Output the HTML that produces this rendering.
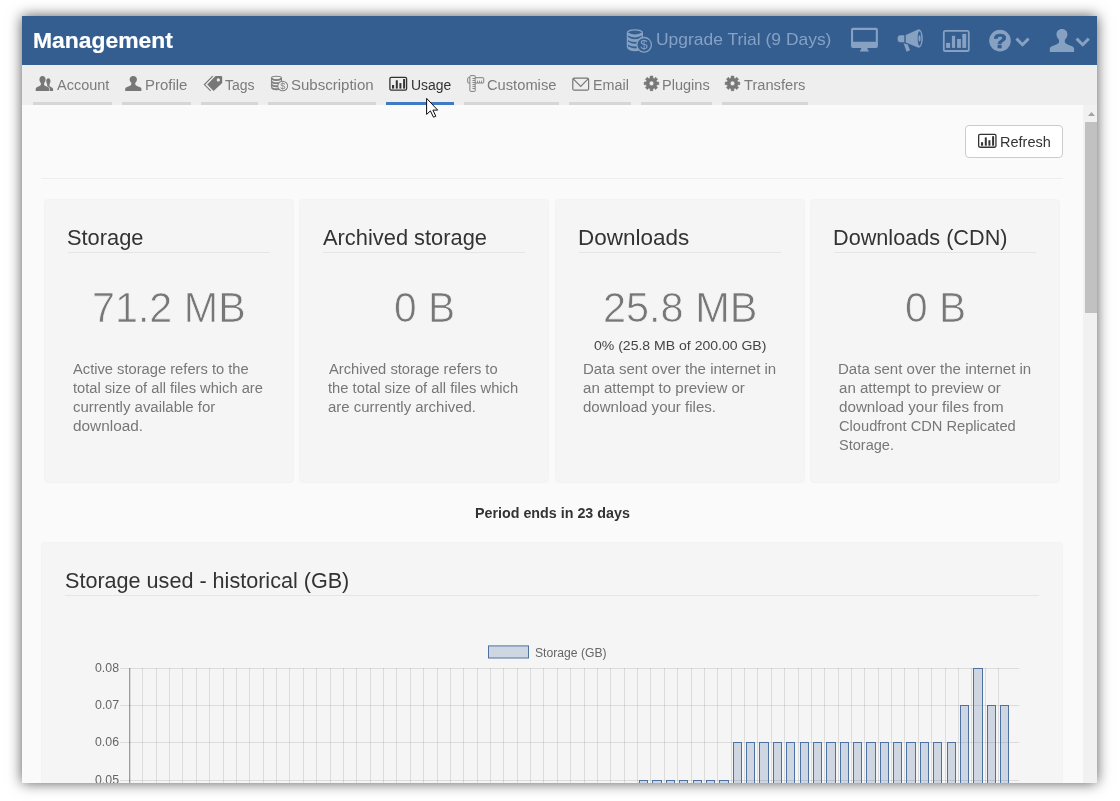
<!DOCTYPE html>
<html lang="en"><head><meta charset="utf-8"><title>Management - Usage</title>
<style>
html,body{margin:0;padding:0;background:#fff;width:1120px;height:801px;overflow:hidden}
body{font-family:'Liberation Sans', sans-serif;position:relative}
.win{position:absolute;left:22px;top:16px;width:1075px;height:767px;overflow:hidden;background:#fbfafa;box-shadow:0 0 13px rgba(0,0,0,.66)}
.o{position:absolute;left:-22px;top:-16px;width:1120px;height:801px;will-change:transform}
.o>*{position:absolute}
.hdr{left:22px;top:16px;width:1075px;height:49px;background:#345e90}
.tabs{left:22px;top:65px;width:1075px;height:40px;background:#eee}
.ul{top:102px;height:3px;background:#d6d6d6}
.ul.on{background:#3f7ac4}
.t{white-space:nowrap;line-height:normal;transform-origin:0 0}
.sbt{left:1083px;top:105px;width:17px;height:700px;background:#f1f1f1}
.sbh{left:1085px;top:122px;width:13px;height:191px;background:#c1c1c1}
.btn{left:965px;top:125px;width:96px;height:31px;border:1px solid #ccc;border-radius:4px;background:#fff}
.hr{left:41px;top:178px;width:1022px;height:1px;background:#eee}
.p{top:199px;width:248px;height:282px;background:#f5f5f5;border:1px solid #f2f2f2;border-radius:4px}
.hl{height:1px;background:#e5e5e5}
.big{left:41px;top:542px;width:1020px;height:300px;background:#f5f5f5;border:1px solid #f3f3f3;border-radius:4px}
svg{left:0;top:0}
svg text{font-family:'Liberation Sans', sans-serif}
</style></head>
<body>
<div class="win"><div class="o">
<div class="hdr"></div>
<div class="tabs"></div>
<div class="ul" style="left:33px;width:79px"></div><div class="ul" style="left:122px;width:69px"></div><div class="ul" style="left:201px;width:57px"></div><div class="ul" style="left:268px;width:108px"></div><div class="ul on" style="left:386px;width:68px"></div><div class="ul" style="left:464px;width:95px"></div><div class="ul" style="left:569px;width:62px"></div><div class="ul" style="left:641px;width:71px"></div><div class="ul" style="left:722px;width:86px"></div>
<div class="sbt"></div><div class="sbh"></div>
<svg width="17" height="17" style="left:1083px;top:105px" viewBox="0 0 17 17"><path d="M5 11 L8.5 7 L12 11 Z" fill="#a3a3a3"/></svg>
<div class="btn"></div>
<div class="hr"></div>
<div class="p" style="left:44px"></div><div class="hl" style="left:68px;top:252px;width:202px"></div><div class="p" style="left:299px"></div><div class="hl" style="left:323px;top:252px;width:202px"></div><div class="p" style="left:555px"></div><div class="hl" style="left:579px;top:252px;width:202px"></div><div class="p" style="left:810px"></div><div class="hl" style="left:834px;top:252px;width:202px"></div>
<div class="big"></div>
<div class="hl" style="left:65px;top:595px;width:974px"></div>
<svg width="1120" height="801" viewBox="0 0 1120 801">
<rect x="120" y="668" width="899" height="1" fill="#000" fill-opacity=".1"/>
<rect x="120" y="705" width="899" height="1" fill="#000" fill-opacity=".1"/>
<rect x="120" y="742" width="899" height="1" fill="#000" fill-opacity=".1"/>
<rect x="120" y="780" width="899" height="1" fill="#000" fill-opacity=".1"/>
<rect x="120" y="817" width="899" height="1" fill="#000" fill-opacity=".1"/>
<rect x="142" y="668" width="1" height="140" fill="#000" fill-opacity=".1"/>
<rect x="156" y="668" width="1" height="140" fill="#000" fill-opacity=".1"/>
<rect x="169" y="668" width="1" height="140" fill="#000" fill-opacity=".1"/>
<rect x="182" y="668" width="1" height="140" fill="#000" fill-opacity=".1"/>
<rect x="196" y="668" width="1" height="140" fill="#000" fill-opacity=".1"/>
<rect x="209" y="668" width="1" height="140" fill="#000" fill-opacity=".1"/>
<rect x="223" y="668" width="1" height="140" fill="#000" fill-opacity=".1"/>
<rect x="236" y="668" width="1" height="140" fill="#000" fill-opacity=".1"/>
<rect x="249" y="668" width="1" height="140" fill="#000" fill-opacity=".1"/>
<rect x="263" y="668" width="1" height="140" fill="#000" fill-opacity=".1"/>
<rect x="276" y="668" width="1" height="140" fill="#000" fill-opacity=".1"/>
<rect x="289" y="668" width="1" height="140" fill="#000" fill-opacity=".1"/>
<rect x="303" y="668" width="1" height="140" fill="#000" fill-opacity=".1"/>
<rect x="316" y="668" width="1" height="140" fill="#000" fill-opacity=".1"/>
<rect x="330" y="668" width="1" height="140" fill="#000" fill-opacity=".1"/>
<rect x="343" y="668" width="1" height="140" fill="#000" fill-opacity=".1"/>
<rect x="356" y="668" width="1" height="140" fill="#000" fill-opacity=".1"/>
<rect x="370" y="668" width="1" height="140" fill="#000" fill-opacity=".1"/>
<rect x="383" y="668" width="1" height="140" fill="#000" fill-opacity=".1"/>
<rect x="396" y="668" width="1" height="140" fill="#000" fill-opacity=".1"/>
<rect x="410" y="668" width="1" height="140" fill="#000" fill-opacity=".1"/>
<rect x="423" y="668" width="1" height="140" fill="#000" fill-opacity=".1"/>
<rect x="437" y="668" width="1" height="140" fill="#000" fill-opacity=".1"/>
<rect x="450" y="668" width="1" height="140" fill="#000" fill-opacity=".1"/>
<rect x="463" y="668" width="1" height="140" fill="#000" fill-opacity=".1"/>
<rect x="477" y="668" width="1" height="140" fill="#000" fill-opacity=".1"/>
<rect x="490" y="668" width="1" height="140" fill="#000" fill-opacity=".1"/>
<rect x="503" y="668" width="1" height="140" fill="#000" fill-opacity=".1"/>
<rect x="517" y="668" width="1" height="140" fill="#000" fill-opacity=".1"/>
<rect x="530" y="668" width="1" height="140" fill="#000" fill-opacity=".1"/>
<rect x="543" y="668" width="1" height="140" fill="#000" fill-opacity=".1"/>
<rect x="557" y="668" width="1" height="140" fill="#000" fill-opacity=".1"/>
<rect x="570" y="668" width="1" height="140" fill="#000" fill-opacity=".1"/>
<rect x="584" y="668" width="1" height="140" fill="#000" fill-opacity=".1"/>
<rect x="597" y="668" width="1" height="140" fill="#000" fill-opacity=".1"/>
<rect x="610" y="668" width="1" height="140" fill="#000" fill-opacity=".1"/>
<rect x="624" y="668" width="1" height="140" fill="#000" fill-opacity=".1"/>
<rect x="637" y="668" width="1" height="140" fill="#000" fill-opacity=".1"/>
<rect x="650" y="668" width="1" height="140" fill="#000" fill-opacity=".1"/>
<rect x="664" y="668" width="1" height="140" fill="#000" fill-opacity=".1"/>
<rect x="677" y="668" width="1" height="140" fill="#000" fill-opacity=".1"/>
<rect x="691" y="668" width="1" height="140" fill="#000" fill-opacity=".1"/>
<rect x="704" y="668" width="1" height="140" fill="#000" fill-opacity=".1"/>
<rect x="717" y="668" width="1" height="140" fill="#000" fill-opacity=".1"/>
<rect x="731" y="668" width="1" height="140" fill="#000" fill-opacity=".1"/>
<rect x="744" y="668" width="1" height="140" fill="#000" fill-opacity=".1"/>
<rect x="757" y="668" width="1" height="140" fill="#000" fill-opacity=".1"/>
<rect x="771" y="668" width="1" height="140" fill="#000" fill-opacity=".1"/>
<rect x="784" y="668" width="1" height="140" fill="#000" fill-opacity=".1"/>
<rect x="798" y="668" width="1" height="140" fill="#000" fill-opacity=".1"/>
<rect x="811" y="668" width="1" height="140" fill="#000" fill-opacity=".1"/>
<rect x="824" y="668" width="1" height="140" fill="#000" fill-opacity=".1"/>
<rect x="838" y="668" width="1" height="140" fill="#000" fill-opacity=".1"/>
<rect x="851" y="668" width="1" height="140" fill="#000" fill-opacity=".1"/>
<rect x="864" y="668" width="1" height="140" fill="#000" fill-opacity=".1"/>
<rect x="878" y="668" width="1" height="140" fill="#000" fill-opacity=".1"/>
<rect x="891" y="668" width="1" height="140" fill="#000" fill-opacity=".1"/>
<rect x="904" y="668" width="1" height="140" fill="#000" fill-opacity=".1"/>
<rect x="918" y="668" width="1" height="140" fill="#000" fill-opacity=".1"/>
<rect x="931" y="668" width="1" height="140" fill="#000" fill-opacity=".1"/>
<rect x="945" y="668" width="1" height="140" fill="#000" fill-opacity=".1"/>
<rect x="958" y="668" width="1" height="140" fill="#000" fill-opacity=".1"/>
<rect x="971" y="668" width="1" height="140" fill="#000" fill-opacity=".1"/>
<rect x="985" y="668" width="1" height="140" fill="#000" fill-opacity=".1"/>
<rect x="998" y="668" width="1" height="140" fill="#000" fill-opacity=".1"/>
<rect x="129" y="668" width="1.3" height="140" fill="#000" fill-opacity=".36"/>
<rect x="639.5" y="780.5" width="8" height="70" fill="rgba(52,94,144,.2)" stroke="#4d72a1" stroke-width="1"/>
<rect x="652.5" y="780.5" width="9" height="70" fill="rgba(52,94,144,.2)" stroke="#4d72a1" stroke-width="1"/>
<rect x="666.5" y="780.5" width="8" height="70" fill="rgba(52,94,144,.2)" stroke="#4d72a1" stroke-width="1"/>
<rect x="679.5" y="780.5" width="8" height="70" fill="rgba(52,94,144,.2)" stroke="#4d72a1" stroke-width="1"/>
<rect x="693.5" y="780.5" width="8" height="70" fill="rgba(52,94,144,.2)" stroke="#4d72a1" stroke-width="1"/>
<rect x="706.5" y="780.5" width="8" height="70" fill="rgba(52,94,144,.2)" stroke="#4d72a1" stroke-width="1"/>
<rect x="719.5" y="780.5" width="9" height="70" fill="rgba(52,94,144,.2)" stroke="#4d72a1" stroke-width="1"/>
<rect x="733.5" y="742.5" width="8" height="108" fill="rgba(52,94,144,.2)" stroke="#4d72a1" stroke-width="1"/>
<rect x="746.5" y="742.5" width="8" height="108" fill="rgba(52,94,144,.2)" stroke="#4d72a1" stroke-width="1"/>
<rect x="759.5" y="742.5" width="9" height="108" fill="rgba(52,94,144,.2)" stroke="#4d72a1" stroke-width="1"/>
<rect x="773.5" y="742.5" width="8" height="108" fill="rgba(52,94,144,.2)" stroke="#4d72a1" stroke-width="1"/>
<rect x="786.5" y="742.5" width="8" height="108" fill="rgba(52,94,144,.2)" stroke="#4d72a1" stroke-width="1"/>
<rect x="800.5" y="742.5" width="8" height="108" fill="rgba(52,94,144,.2)" stroke="#4d72a1" stroke-width="1"/>
<rect x="813.5" y="742.5" width="8" height="108" fill="rgba(52,94,144,.2)" stroke="#4d72a1" stroke-width="1"/>
<rect x="826.5" y="742.5" width="9" height="108" fill="rgba(52,94,144,.2)" stroke="#4d72a1" stroke-width="1"/>
<rect x="840.5" y="742.5" width="8" height="108" fill="rgba(52,94,144,.2)" stroke="#4d72a1" stroke-width="1"/>
<rect x="853.5" y="742.5" width="8" height="108" fill="rgba(52,94,144,.2)" stroke="#4d72a1" stroke-width="1"/>
<rect x="866.5" y="742.5" width="9" height="108" fill="rgba(52,94,144,.2)" stroke="#4d72a1" stroke-width="1"/>
<rect x="880.5" y="742.5" width="8" height="108" fill="rgba(52,94,144,.2)" stroke="#4d72a1" stroke-width="1"/>
<rect x="893.5" y="742.5" width="8" height="108" fill="rgba(52,94,144,.2)" stroke="#4d72a1" stroke-width="1"/>
<rect x="906.5" y="742.5" width="9" height="108" fill="rgba(52,94,144,.2)" stroke="#4d72a1" stroke-width="1"/>
<rect x="920.5" y="742.5" width="8" height="108" fill="rgba(52,94,144,.2)" stroke="#4d72a1" stroke-width="1"/>
<rect x="933.5" y="742.5" width="8" height="108" fill="rgba(52,94,144,.2)" stroke="#4d72a1" stroke-width="1"/>
<rect x="947.5" y="742.5" width="8" height="108" fill="rgba(52,94,144,.2)" stroke="#4d72a1" stroke-width="1"/>
<rect x="960.5" y="705.5" width="8" height="145" fill="rgba(52,94,144,.2)" stroke="#4d72a1" stroke-width="1"/>
<rect x="973.5" y="668.5" width="9" height="182" fill="rgba(52,94,144,.2)" stroke="#4d72a1" stroke-width="1"/>
<rect x="987.5" y="705.5" width="8" height="145" fill="rgba(52,94,144,.2)" stroke="#4d72a1" stroke-width="1"/>
<rect x="1000.5" y="705.5" width="8" height="145" fill="rgba(52,94,144,.2)" stroke="#4d72a1" stroke-width="1"/>
<rect x="488.5" y="645.9" width="40" height="12.1" fill="rgba(52,94,144,.2)" stroke="#4d72a1" stroke-width="1"/>
<g fill="none" stroke="#87a1c2"><path d="M628.2 32.9a6.7 3.1 0 0 0 13.4 0" stroke-width="2.8"/><path d="M628.2 37.5a6.7 3.1 0 0 0 13.4 0" stroke-width="2.8"/><path d="M628.2 42.1a6.7 3.1 0 0 0 13.4 0" stroke-width="2.8"/><path d="M628.2 46.7a6.7 3.1 0 0 0 13.4 0" stroke-width="2.8"/><path d="M627.45 32.8V47M642.35 32.8V38" stroke-width="1.3"/><ellipse cx="634.9" cy="32.8" rx="7.45" ry="2.9" stroke-width="1.3"/><circle cx="644.1" cy="44.8" r="7.3" fill="#345e90" stroke-width="1.3"/></g><text x="644.1" y="49.3" font-size="13.5" text-anchor="middle" fill="#87a1c2">$</text>
<path fill="#87a1c2" fill-rule="evenodd" d="M853 27.8H875.9A2 2 0 0 1 877.9 29.8V46.1A2 2 0 0 1 875.9 48.1H867.3L867.9 50.2H868.7V51.4H859.9V50.2H860.7L861.3 48.1H853A2 2 0 0 1 851 46.1V29.8A2 2 0 0 1 853 27.8ZM853.1 30V41.8H875.8V30Z"/>
<g fill="#87a1c2"><path d="M900.6 35.2H904.3V42.2H900.6A3 3 0 0 1 897.6 39.2V38.2A3 3 0 0 1 900.6 35.2Z"/><path fill-rule="evenodd" d="M905.7 34.9L918.6 29.3C921 29.3 922.8 33.4 922.8 38.5C922.8 43.6 921 47.8 918.6 47.8L905.7 42.6ZM919.5 31.3C918.5 31.3 917.7 34.5 917.7 38.5C917.7 42.5 918.5 45.7 919.5 45.7C920.5 45.7 921.3 42.5 921.3 38.5C921.3 34.5 920.5 31.3 919.5 31.3Z"/><ellipse cx="919.5" cy="38.5" rx="1.1" ry="3.2"/><path d="M903.6 43.2L907.8 44.4L910 50.2L906.6 51.8Z"/></g>
<rect x="943.8" y="30.9" width="25.000000000000068" height="20.099999999999998" rx="1.6" fill="none" stroke="#87a1c2" stroke-width="1.8"/><rect x="946.1" y="42.9" width="4.00" height="5.00" fill="#87a1c2"/><rect x="951.9" y="35.8" width="3.20" height="12.10" fill="#87a1c2"/><rect x="957.1" y="39" width="3.80" height="8.90" fill="#87a1c2"/><rect x="962.3" y="33.9" width="3.90" height="14.00" fill="#87a1c2"/>
<circle cx="1000" cy="40.6" r="10.8" fill="#87a1c2"/><text transform="translate(1000.1 48) scale(1.12 1)" font-size="20" font-weight="700" text-anchor="middle" fill="#345e90" stroke="#345e90" stroke-width=".7">?</text>
<path d="M1016.4 38.6L1022.5 44.7L1028.6 38.6M1076.6 38.6L1082.7 44.7L1088.8 38.6" fill="none" stroke="#87a1c2" stroke-width="2.9"/>
<path transform="translate(1049.8 29.1) scale(1.0125 1.0000)" d="M12 0C15.2 0 17.4 2.3 17.4 5.2C17.4 7.2 16.6 9 15.3 10.2C14.8 10.7 14.8 12 14.8 12.5C14.8 13.8 15.8 14.6 17.5 15.3L22 17.2C23.4 17.8 24 18.8 24 20L24 22.8L0 22.8L0 20C0 18.8 .6 17.8 2 17.2L6.5 15.3C8.2 14.6 9.2 13.8 9.2 12.5C9.2 12 9.2 10.7 8.7 10.2C7.4 9 6.6 7.2 6.6 5.2C6.6 2.3 8.8 0 12 0Z" fill="#87a1c2" />
<path transform="translate(43.6 78.2) scale(0.3958 0.5570)" d="M12 0C15.2 0 17.4 2.3 17.4 5.2C17.4 7.2 16.6 9 15.3 10.2C14.8 10.7 14.8 12 14.8 12.5C14.8 13.8 15.8 14.6 17.5 15.3L22 17.2C23.4 17.8 24 18.8 24 20L24 22.8L0 22.8L0 20C0 18.8 .6 17.8 2 17.2L6.5 15.3C8.2 14.6 9.2 13.8 9.2 12.5C9.2 12 9.2 10.7 8.7 10.2C7.4 9 6.6 7.2 6.6 5.2C6.6 2.3 8.8 0 12 0Z" fill="#777" />
<path transform="translate(35.7 76) scale(0.5667 0.6535)" d="M12 0C15.2 0 17.4 2.3 17.4 5.2C17.4 7.2 16.6 9 15.3 10.2C14.8 10.7 14.8 12 14.8 12.5C14.8 13.8 15.8 14.6 17.5 15.3L22 17.2C23.4 17.8 24 18.8 24 20L24 22.8L0 22.8L0 20C0 18.8 .6 17.8 2 17.2L6.5 15.3C8.2 14.6 9.2 13.8 9.2 12.5C9.2 12 9.2 10.7 8.7 10.2C7.4 9 6.6 7.2 6.6 5.2C6.6 2.3 8.8 0 12 0Z" fill="#777" stroke="#eee" stroke-width="2" paint-order="stroke"/>
<path transform="translate(125.2 75.9) scale(0.6750 0.6579)" d="M12 0C15.2 0 17.4 2.3 17.4 5.2C17.4 7.2 16.6 9 15.3 10.2C14.8 10.7 14.8 12 14.8 12.5C14.8 13.8 15.8 14.6 17.5 15.3L22 17.2C23.4 17.8 24 18.8 24 20L24 22.8L0 22.8L0 20C0 18.8 .6 17.8 2 17.2L6.5 15.3C8.2 14.6 9.2 13.8 9.2 12.5C9.2 12 9.2 10.7 8.7 10.2C7.4 9 6.6 7.2 6.6 5.2C6.6 2.3 8.8 0 12 0Z" fill="#777" />
<path d="M215.5 76H221A1.2 1.2 0 0 1 222.2 77.2V83L213.6 90.9L207.3 84.6ZM219.9 79.9A1.6 1.6 0 1 0 216.7 79.9A1.6 1.6 0 1 0 219.9 79.9Z" fill="#777" fill-rule="evenodd"/><path d="M212.8 76.2L204.4 84.6L210.7 90.9" fill="none" stroke="#777" stroke-width="1.2"/>
<g transform="translate(-152.647 56.441) scale(0.6759 0.6590)"><g fill="none" stroke="#808080"><path d="M628.2 32.9a6.7 3.1 0 0 0 13.4 0" stroke-width="2.8"/><path d="M628.2 37.5a6.7 3.1 0 0 0 13.4 0" stroke-width="2.8"/><path d="M628.2 42.1a6.7 3.1 0 0 0 13.4 0" stroke-width="2.8"/><path d="M628.2 46.7a6.7 3.1 0 0 0 13.4 0" stroke-width="2.8"/><path d="M627.45 32.8V47M642.35 32.8V38" stroke-width="1.5"/><ellipse cx="634.9" cy="32.8" rx="7.45" ry="2.9" stroke-width="1.5"/><circle cx="644.1" cy="44.8" r="7.3" fill="#eee" stroke-width="1.5"/></g><text x="644.1" y="49.3" font-size="13.5" text-anchor="middle" fill="#808080">$</text></g>
<rect x="389.9" y="77.4" width="16.7" height="12.7" rx="1.4" fill="none" stroke="#333" stroke-width="1.3"/><rect x="392" y="85" width="2.10" height="3.60" fill="#333"/><rect x="395.8" y="80.3" width="2.00" height="8.30" fill="#333"/><rect x="399.4" y="83.1" width="2.00" height="5.50" fill="#333"/><rect x="403.1" y="79" width="2.00" height="9.60" fill="#333"/>
<g fill="#eee" stroke="#808080" stroke-width="1"><rect x="467.7" y="77.7" width="16" height="5.3" rx=".6"/><path d="M477.5 80.6V83M479.5 80.6V83M481.5 80.6V83" stroke-width=".8"/><rect x="469.9" y="75.6" width="5.3" height="15.8" rx=".6"/><path d="M472.4 78.5H475M472.4 80.5H475M472.4 82.5H475M472.4 84.5H475M472.4 86.5H475M472.4 88.5H475" stroke-width=".9"/></g>
<rect x="572.8" y="78.2" width="15.8" height="12" rx="1.5" fill="none" stroke="#777" stroke-width="1.2"/><path d="M573 78.6L580.7 86.4L588.4 78.6" fill="none" stroke="#777" stroke-width="1.2"/>
<path d="M656.70 81.96L658.78 82.05L658.78 84.75L656.70 84.84L656.20 86.06L657.60 87.59L655.69 89.50L654.16 88.10L652.94 88.60L652.85 90.68L650.15 90.68L650.06 88.60L648.84 88.10L647.31 89.50L645.40 87.59L646.80 86.06L646.30 84.84L644.22 84.75L644.22 82.05L646.30 81.96L646.80 80.74L645.40 79.21L647.31 77.30L648.84 78.70L650.06 78.20L650.15 76.12L652.85 76.12L652.94 78.20L654.16 78.70L655.69 77.30L657.60 79.21L656.20 80.74ZM653.80 83.4A2.3 2.3 0 1 0 649.20 83.4A2.3 2.3 0 1 0 653.80 83.4Z" fill="#777" fill-rule="evenodd" stroke="#777" stroke-width=".6" stroke-linejoin="round"/>
<path d="M737.70 81.96L739.78 82.05L739.78 84.75L737.70 84.84L737.20 86.06L738.60 87.59L736.69 89.50L735.16 88.10L733.94 88.60L733.85 90.68L731.15 90.68L731.06 88.60L729.84 88.10L728.31 89.50L726.40 87.59L727.80 86.06L727.30 84.84L725.22 84.75L725.22 82.05L727.30 81.96L727.80 80.74L726.40 79.21L728.31 77.30L729.84 78.70L731.06 78.20L731.15 76.12L733.85 76.12L733.94 78.20L735.16 78.70L736.69 77.30L738.60 79.21L737.20 80.74ZM734.80 83.4A2.3 2.3 0 1 0 730.20 83.4A2.3 2.3 0 1 0 734.80 83.4Z" fill="#777" fill-rule="evenodd" stroke="#777" stroke-width=".6" stroke-linejoin="round"/>
<rect x="978.65" y="134.35" width="17.300000000000022" height="12.900000000000016" rx="1.4" fill="none" stroke="#333" stroke-width="1.3"/><rect x="981" y="142.2" width="2.10" height="3.50" fill="#333"/><rect x="984.8" y="137.4" width="2.00" height="8.30" fill="#333"/><rect x="988.4" y="140.2" width="2.00" height="5.50" fill="#333"/><rect x="992.1" y="136.2" width="2.00" height="9.50" fill="#333"/>
<path d="M426.6 98.4V114.4L430.4 110.9L433.5 117.2L435.8 116.2L432.9 110.1H437.7Z" fill="#fff" stroke="#0a0a14" stroke-width="1" stroke-linejoin="miter"/>
</svg>
<span class="t" style="left:32.97px;top:28px;font-size:22px;font-weight:700;color:#fff;transform:scaleX(1.0396);-webkit-text-stroke:.2px #fff;">Management</span><span class="t" style="left:56.77px;top:77px;font-size:14px;font-weight:400;color:#7b7b7b;transform:scaleX(1.0344);">Account</span><span class="t" style="left:145.37px;top:77px;font-size:14px;font-weight:400;color:#7b7b7b;transform:scaleX(1.0681);">Profile</span><span class="t" style="left:225.49px;top:77px;font-size:14px;font-weight:400;color:#7b7b7b;transform:scaleX(1.0015);">Tags</span><span class="t" style="left:291.32px;top:77px;font-size:14px;font-weight:400;color:#7b7b7b;transform:scaleX(1.0728);">Subscription</span><span class="t" style="left:410.82px;top:77px;font-size:14px;font-weight:400;color:#333;transform:scaleX(0.9957);">Usage</span><span class="t" style="left:487.25px;top:77px;font-size:14px;font-weight:400;color:#7b7b7b;transform:scaleX(1.0493);">Customise</span><span class="t" style="left:592.57px;top:77px;font-size:14px;font-weight:400;color:#7b7b7b;transform:scaleX(1.0249);">Email</span><span class="t" style="left:661.81px;top:77px;font-size:14px;font-weight:400;color:#7b7b7b;transform:scaleX(1.0391);">Plugins</span><span class="t" style="left:743.67px;top:77px;font-size:14px;font-weight:400;color:#7b7b7b;transform:scaleX(1.0469);">Transfers</span><span class="t" style="left:656.35px;top:30px;font-size:17px;font-weight:400;color:#86a1c4;transform:scaleX(1.0258);">Upgrade Trial (9 Days)</span><span class="t" style="left:999.81px;top:134px;font-size:14px;font-weight:400;color:#333;transform:scaleX(1.0368);">Refresh</span><span class="t" style="left:67.01px;top:225px;font-size:22px;font-weight:400;color:#333;transform:scaleX(0.9922);">Storage</span><span class="t" style="left:323.46px;top:225px;font-size:22px;font-weight:400;color:#333;transform:scaleX(0.9935);">Archived storage</span><span class="t" style="left:577.66px;top:225px;font-size:22px;font-weight:400;color:#333;transform:scaleX(1.0212);">Downloads</span><span class="t" style="left:833.12px;top:225px;font-size:22px;font-weight:400;color:#333;transform:scaleX(0.9844);">Downloads (CDN)</span><span class="t" style="left:91.98px;top:284px;font-size:42px;font-weight:400;color:#777;transform:scaleX(0.9825);-webkit-text-stroke:.7px #f5f5f5;">71.2 MB</span><span class="t" style="left:393.71px;top:284px;font-size:42px;font-weight:400;color:#777;transform:scaleX(0.9680);-webkit-text-stroke:.7px #f5f5f5;">0 B</span><span class="t" style="left:602.52px;top:284px;font-size:42px;font-weight:400;color:#777;transform:scaleX(0.9869);-webkit-text-stroke:.7px #f5f5f5;">25.8 MB</span><span class="t" style="left:905.01px;top:284px;font-size:42px;font-weight:400;color:#777;transform:scaleX(0.9680);-webkit-text-stroke:.7px #f5f5f5;">0 B</span><span class="t" style="left:593.65px;top:338px;font-size:13px;font-weight:400;color:#444;transform:scaleX(1.0796);">0% (25.8 MB of 200.00 GB)</span><span class="t" style="left:474.64px;top:505px;font-size:14px;font-weight:700;color:#333;transform:scaleX(1.0205);">Period ends in 23 days</span><span class="t" style="left:64.72px;top:568px;font-size:22px;font-weight:400;color:#333;transform:scaleX(0.9811);">Storage used - historical (GB)</span><span class="t" style="left:534.85px;top:646px;font-size:12px;font-weight:400;color:#666;transform:scaleX(1.0128);">Storage (GB)</span><span class="t" style="left:95.02px;top:661px;font-size:12px;font-weight:400;color:#666;transform:scaleX(1.0282);">0.08</span><span class="t" style="left:95.02px;top:698px;font-size:12px;font-weight:400;color:#666;transform:scaleX(1.0320);">0.07</span><span class="t" style="left:95.02px;top:735px;font-size:12px;font-weight:400;color:#666;transform:scaleX(1.0285);">0.06</span><span class="t" style="left:95.02px;top:773px;font-size:12px;font-weight:400;color:#666;transform:scaleX(1.0274);">0.05</span><span class="t" style="left:73.27px;top:361px;font-size:14px;font-weight:400;color:#777;transform:scaleX(1.0500);">Active storage refers to the</span><span class="t" style="left:73.08px;top:380px;font-size:14px;font-weight:400;color:#777;transform:scaleX(1.0472);">total size of all files which are</span><span class="t" style="left:72.66px;top:399px;font-size:14px;font-weight:400;color:#777;transform:scaleX(1.0693);">currently available for</span><span class="t" style="left:72.65px;top:418px;font-size:14px;font-weight:400;color:#777;transform:scaleX(1.0974);">download.</span><span class="t" style="left:328.57px;top:361px;font-size:14px;font-weight:400;color:#777;transform:scaleX(1.0521);">Archived storage refers to</span><span class="t" style="left:328.38px;top:380px;font-size:14px;font-weight:400;color:#777;transform:scaleX(1.0535);">the total size of all files which</span><span class="t" style="left:327.96px;top:399px;font-size:14px;font-weight:400;color:#777;transform:scaleX(1.0685);">are currently archived.</span><span class="t" style="left:582.77px;top:361px;font-size:14px;font-weight:400;color:#777;transform:scaleX(1.0747);">Data sent over the internet in</span><span class="t" style="left:583.36px;top:380px;font-size:14px;font-weight:400;color:#777;transform:scaleX(1.0779);">an attempt to preview or</span><span class="t" style="left:583.37px;top:399px;font-size:14px;font-weight:400;color:#777;transform:scaleX(1.0748);">download your files.</span><span class="t" style="left:838.17px;top:361px;font-size:14px;font-weight:400;color:#777;transform:scaleX(1.0747);">Data sent over the internet in</span><span class="t" style="left:838.76px;top:380px;font-size:14px;font-weight:400;color:#777;transform:scaleX(1.0779);">an attempt to preview or</span><span class="t" style="left:838.76px;top:399px;font-size:14px;font-weight:400;color:#777;transform:scaleX(1.0849);">download your files from</span><span class="t" style="left:838.66px;top:418px;font-size:14px;font-weight:400;color:#777;transform:scaleX(1.0464);">Cloudfront CDN Replicated</span><span class="t" style="left:838.74px;top:437px;font-size:14px;font-weight:400;color:#777;transform:scaleX(1.0387);">Storage.</span>
</div></div>
</body></html>
